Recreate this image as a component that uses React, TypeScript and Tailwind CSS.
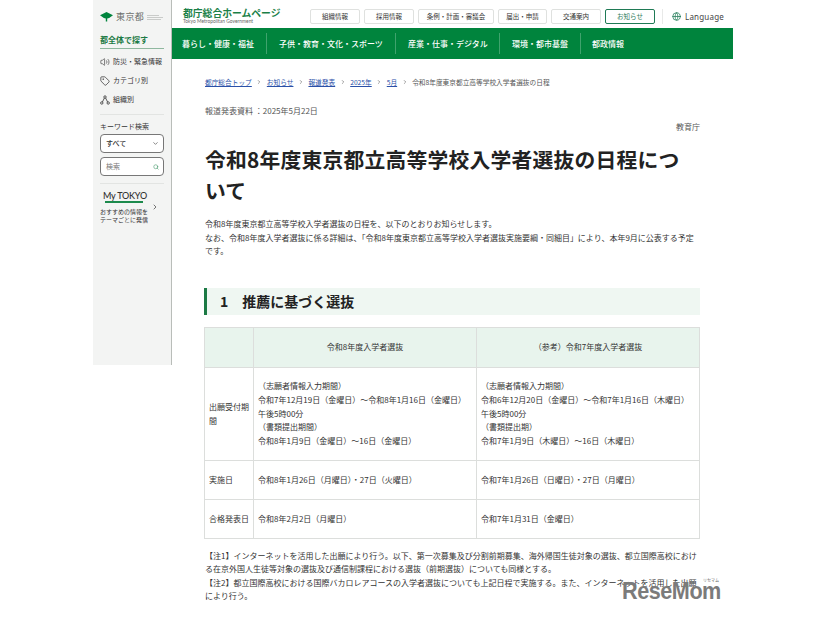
import React from "react";
import { ChevronRight, Search, ChevronDown, Tag, Globe, Volume2 } from "lucide-react";

const topLinks = ["組織情報", "採用情報", "条例・計画・審議会", "届出・申請", "交通案内"];
const topW = ["w-[50px]", "w-[50px]", "w-[76px]", "w-[49px]", "w-[50px]"];
const nav: [string, string, string][] = [
  ["暮らし・健康・福祉", "w-[95px]", "pl-[10px]"],
  ["子供・教育・文化・スポーツ", "w-[129px]", "pl-[12px]"],
  ["産業・仕事・デジタル", "w-[104px]", "pl-[12px]"],
  ["環境・都市基盤", "w-[81px]", "pl-[12px]"],
  ["都政情報", "w-[70px]", "pl-[11px]"],
];
const crumbs = ["都庁総合トップ", "お知らせ", "報道発表", "2025年", "5月"];

function Leaf() {
  return (
    <svg width="13" height="12" viewBox="0 0 13 12">
      <path d="M6.5 1 L13 4.2 Q9.5 7.2 7.2 7.4 L7.2 10.5 L5.8 10.5 L5.8 7.4 Q3.5 7.2 0 4.2 Z" fill="#00843d" />
    </svg>
  );
}

function OrgIcon() {
  return (
    <svg width="10" height="10" viewBox="0 0 10 10" fill="none" stroke="#333" strokeWidth="0.8">
      <circle cx="5" cy="2" r="1.2" />
      <circle cx="1.8" cy="8" r="1.2" />
      <circle cx="8.2" cy="8" r="1.2" />
      <path d="M4.4 3 L2.4 7 M5.6 3 L7.6 7" />
    </svg>
  );
}

function Sidebar() {
  return (
    <aside className="w-[79px] h-[365px] shrink-0 bg-[#f3f4f3] border-r border-[#b9bdb9] px-[7px] text-[#333]">
      <div className="flex items-center h-[32px] pt-[2px] gap-[3px]">
        <Leaf />
        <span className="text-[9px] text-[#6b6f6b] tracking-[0.4px]">東京都</span>
        <span className="w-[16px] flex flex-col gap-[1px]">
          <span className="h-[1px] w-[12px] bg-[#c9cbc9]" />
          <span className="h-[1px] w-[16px] bg-[#c9cbc9]" />
          <span className="h-[1px] w-[14px] bg-[#c9cbc9]" />
        </span>
      </div>
      <div className="text-[8px] font-bold text-[#1c7a45] h-[17px] leading-[15px] border-b border-[#8fb89f]">都全体で探す</div>
      <div className="flex items-center gap-[3px] mt-[6px] h-[13px] text-[7px]"><Volume2 size={10} strokeWidth={1.5} />防災・緊急情報</div>
      <div className="flex items-center gap-[3px] mt-[6px] h-[13px] text-[7px]"><Tag size={10} strokeWidth={1.8} />カテゴリ別</div>
      <div className="flex items-center gap-[3px] mt-[6px] h-[13px] text-[7px]"><OrgIcon />組織別</div>
      <div className="border-t border-[#e2e4e2] mt-[8px] pt-[6px] text-[7px] leading-[10px] h-[18px]">キーワード検索</div>
      <div className="flex items-center justify-between h-[19px] mt-[2px] rounded-[4px] border border-[#777] bg-white pl-[5px] pr-[4px] text-[7px] font-medium">すべて<ChevronDown size={7} /></div>
      <div className="flex items-center justify-between h-[19px] mt-[4px] rounded-[4px] border border-[#777] bg-white pl-[5px] pr-[4px] text-[7px] text-[#777]">検索<Search size={6} className="text-[#2c8a57]" /></div>
      <div className="border-t border-[#e2e4e2] mt-[7px] pt-[7px] relative">
        <div className="text-[9px] leading-[10px] font-medium text-center w-[42px] ml-[3px] font-['Lato',sans-serif] tracking-[-0.2px] whitespace-nowrap">My TOKYO</div>
        <div className="h-[2px] w-[38px] ml-[5px] bg-[#1c8a4c]" />
        <div className="text-[6px] leading-[8px] mt-[5px] whitespace-nowrap">おすすめの情報を<br />テーマごとに発信</div>
        <ChevronRight size={8} strokeWidth={2} className="absolute right-[5px] top-[19px]" />
      </div>
    </aside>
  );
}

function Header() {
  return (
    <header>
      <div className="h-[28px] flex items-start pl-[11px]">
        <div className="w-[127px] pt-[7px]">
          <div className="text-[9.8px] leading-[12px] font-bold text-[#1a7f48]">都庁総合ホームページ</div>
          <div className="text-[4.9px] leading-[5px] text-[#666] font-['Lato',sans-serif] whitespace-nowrap">Tokyo Metropolitan Government</div>
        </div>
        <div className="flex gap-[4px] pt-[9px]">
          {topLinks.map((t, i) => (
            <div key={t} className={`${topW[i]} h-[15px] flex items-center justify-center bg-white border border-[#dfe1df] rounded-[2px] text-[6.5px] text-[#333] whitespace-nowrap`}>{t}</div>
          ))}
          <div className="w-[50px] h-[15px] flex items-center justify-center border border-[#1f7a55] rounded-[2px] text-[6.5px] text-[#2c7a58]">お知らせ</div>
        </div>
        <div className="ml-[7px] mt-[9px] h-[15px] border-l border-[#e8e9e8] pl-[9px] flex items-center gap-[4px] text-[8px] text-[#444] font-['Noto_Sans',sans-serif] tracking-[0.2px]">
          <Globe size={9} className="text-[#1f7a55]" />Language
        </div>
      </div>
      <nav className="h-[31px] bg-[#00843d] flex items-center text-white text-[8px] font-medium">
        {nav.map(([t, w, p], i) => (
          <div key={t} className={`${w} ${p} h-[21px] flex items-center ${i < 4 ? "border-r border-[#3fa36d]" : ""}`}>{t}</div>
        ))}
      </nav>
    </header>
  );
}

function Th({ children, w }: { children?: React.ReactNode; w: string }) {
  return <th className={`${w} border border-[#dcdedc] bg-[#e8f4ed] text-center font-normal text-[8px] text-[#333] p-0`}>{children}</th>;
}
function Td({ children }: { children?: React.ReactNode }) {
  return <td className="border border-[#dcdedc] text-[8px] leading-[13.8px] text-[#333] align-middle pl-[4px] pr-[3px]">{children}</td>;
}

function Content() {
  return (
    <main className="pl-[33px] pr-[33px] text-[#333]">
      <div className="flex items-center mt-[18px] h-[10px] text-[6.7px] gap-[4px] whitespace-nowrap">
        {crumbs.map((c) => (
          <React.Fragment key={c}>
            <span className="text-[#2a50a8] underline">{c}</span>
            <ChevronRight size={6} strokeWidth={2} className="text-[#444] mx-[0.5px]" />
          </React.Fragment>
        ))}
        <span className="text-[#555]">令和8年度東京都立高等学校入学者選抜の日程</span>
      </div>
      <div className="mt-[18px] text-[8px] leading-[12px] text-[#555]">報道発表資料 ：2025年5月22日</div>
      <div className="mt-[4px] text-[8px] leading-[12px] text-right text-[#555]">教育庁</div>
      <h1 className="mt-[11px] text-[20.8px] leading-[31px] font-bold text-[#222] tracking-[0.2px]">令和8年度東京都立高等学校入学者選抜の日程について</h1>
      <div className="mt-[11px] text-[8px] leading-[13.5px]">
        令和8年度東京都立高等学校入学者選抜の日程を、以下のとおりお知らせします。<br />
        なお、令和8年度入学者選抜に係る詳細は、「令和8年度東京都立高等学校入学者選抜実施要綱・同細目」により、本年9月に公表する予定です。
      </div>
      <h2 className="mt-[30px] -ml-[1px] h-[27px] bg-[#eff7f2] border-l-[3px] border-[#1c7a45] pl-[13px] flex items-center text-[14px] font-bold text-[#222] gap-[14px]">
        <span>1</span><span>推薦に基づく選抜</span>
      </h2>
      <table className="mt-[12px] -ml-[1px] w-[495px] border-collapse table-fixed">
        <thead>
          <tr className="h-[40px]">
            <Th w="w-[49px]" /><Th w="w-[223px]">令和8年度入学者選抜</Th><Th w="w-[223px]">（参考）令和7年度入学者選抜</Th>
          </tr>
        </thead>
        <tbody>
          <tr className="h-[93px]">
            <Td>出願受付期間</Td>
            <Td>（志願者情報入力期間）<br />令和7年12月19日（金曜日）～令和8年1月16日（金曜日）<br />午後5時00分<br />（書類提出期間）<br />令和8年1月9日（金曜日）～16日（金曜日）</Td>
            <Td>（志願者情報入力期間）<br />令和6年12月20日（金曜日）～令和7年1月16日（木曜日）<br />午後5時00分<br />（書類提出期）<br />令和7年1月9日（木曜日）～16日（木曜日）</Td>
          </tr>
          <tr className="h-[39px]">
            <Td>実施日</Td><Td>令和8年1月26日（月曜日）・27日（火曜日）</Td><Td>令和7年1月26日（日曜日）・27日（月曜日）</Td>
          </tr>
          <tr className="h-[39px]">
            <Td>合格発表日</Td><Td>令和8年2月2日（月曜日）</Td><Td>令和7年1月31日（金曜日）</Td>
          </tr>
        </tbody>
      </table>
      <div className="mt-[10px] text-[8px] leading-[13.5px] h-[60px]">
        【注1】インターネットを活用した出願により行う。以下、第一次募集及び分割前期募集、海外帰国生徒対象の選抜、都立国際高校における在京外国人生徒等対象の選抜及び通信制課程における選抜（前期選抜）についても同様とする。<br />
        【注2】都立国際高校における国際バカロレアコースの入学者選抜についても上記日程で実施する。また、インターネットを活用した出願により行う。
      </div>
    </main>
  );
}

export default function App() {
  return (
    <div className="relative w-[826px] h-[620px] overflow-hidden bg-white pl-[93px] font-['Noto_Sans_CJK_JP','Noto_Sans',sans-serif] flex items-start">
      <Sidebar />
      <div className="w-[561px] shrink-0">
        <Header />
        <Content />
      </div>
      <div className="absolute left-[622px] top-[579px] w-[100px] h-[24px]">
        <span className="block origin-left scale-x-[0.9] text-[24px] leading-[24px] font-bold text-[#7b7b7b] tracking-[-0.5px] font-['Liberation_Sans',sans-serif] whitespace-nowrap">ReseMom</span>
        <span className="absolute right-[3px] top-[-1px] text-[4px] leading-[5px] text-[#666]">リセマム</span>
      </div>
    </div>
  );
}
